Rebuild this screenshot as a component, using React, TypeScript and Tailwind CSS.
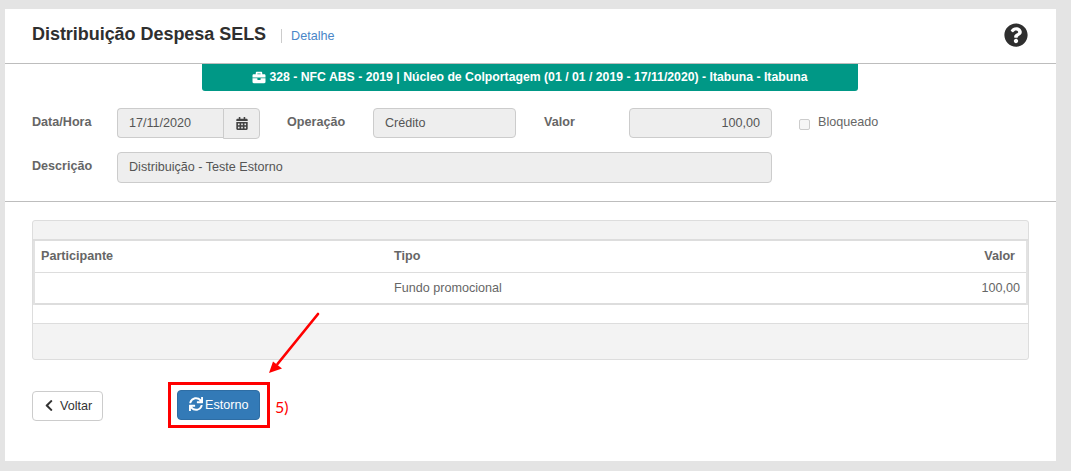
import { FaBriefcase, FaCalendarAlt, FaChevronLeft, FaQuestionCircle, FaSync } from 'react-icons/fa';

const label = 'text-[12.6px] font-bold text-[#666] leading-[16px]';
const field = 'h-[30px] bg-[#eee] border border-[#ccc] rounded-[4px] px-[11px] flex items-center text-[12.6px] text-[#555]';

export default function App() {
  return (
    <div className="h-[471px] w-[1071px] bg-[#e4e4e4] pt-[9px] pl-[5px] overflow-hidden font-['Liberation_Sans',Arial,sans-serif]">
      <div className="relative w-[1051px] h-[452px] bg-white">
        {/* Title */}
        <div className="h-[55px] border-b border-[#bdbdbd] pl-[27px] pr-[28px] flex items-center">
          <h1 className="text-[18px] leading-[24px] font-bold text-[#2f2f2f] -mt-[4px] tracking-[-0.04px]">Distribuição Despesa SELS</h1>
          <span className="ml-[15px] border-l border-[#ccc] pl-[9px] text-[12.6px] leading-[14px] text-[#4a86c8]">Detalhe</span>
          <FaQuestionCircle className="ml-auto w-[24px] h-[24px] text-[#2f2f2f] -mt-[3px]" />
        </div>

        {/* Project band */}
        <div className="ml-[197px] w-[656px] h-[27px] bg-[#009886] rounded-b-[3px] flex items-center justify-center gap-[3px] text-[12.25px] font-bold text-white">
          <FaBriefcase className="w-[14px] h-[13px]" />
          <span>328 - NFC ABS - 2019 | Núcleo de Colportagem (01 / 01 / 2019 - 17/11/2020) - Itabuna - Itabuna</span>
        </div>

        {/* Form */}
        <div className="pl-[27px] pt-[17px] h-[111px] border-b border-[#bdbdbd]">
          <div className="flex items-start">
            <span className={`${label} w-[85px] mt-[6px]`}>Data/Hora</span>
            <div className={`${field} w-[106px] rounded-r-none border-r-0`}>17/11/2020</div>
            <div className="w-[37px] h-[31px] bg-[#eee] border border-[#ccc] rounded-r-[4px] flex items-center justify-center text-[#444]">
              <FaCalendarAlt className="w-[12px] h-[13px]" />
            </div>
            <span className={`${label} w-[86px] ml-[27px] mt-[6px]`}>Operação</span>
            <div className={`${field} w-[143px]`}>Crédito</div>
            <span className={`${label} w-[85px] ml-[28px] mt-[6px]`}>Valor</span>
            <div className={`${field} w-[143px] justify-end`}>100,00</div>
            <div className="ml-[27px] mt-[11px] w-[11px] h-[11px] border border-[#ccc] rounded-[2px] bg-[#f6f6f6]" />
            <span className="ml-[8px] mt-[6px] text-[12.6px] leading-[16px] text-[#666]">Bloqueado</span>
          </div>
          <div className="flex items-start mt-[13px]">
            <span className={`${label} w-[85px] mt-[6px]`}>Descrição</span>
            <div className={`${field} w-[655px] h-[31px]`}>Distribuição - Teste Estorno</div>
          </div>
        </div>

        {/* Grid panel */}
        <div className="ml-[27px] mt-[18px] w-[997px] h-[140px] border border-[#ddd] rounded-[3px] bg-[#f3f3f3] overflow-hidden flex flex-col">
          <div className="h-[20px] shrink-0 border-b-2 border-[#ddd]" />
          <div className="bg-white border-x-2 border-[#e2e2e2] text-[12.6px] text-[#666]">
            <div className="h-[32px] border-b border-[#ddd] flex items-center font-bold">
              <span className="w-[359px] pl-[6px]">Participante</span>
              <span className="flex-1">Tipo</span>
              <span className="pr-[11px]">Valor</span>
            </div>
            <div className="h-[32px] border-b-2 border-[#ddd] flex items-center">
              <span className="w-[359px]" />
              <span className="flex-1">Fundo promocional</span>
              <span className="pr-[6px]">100,00</span>
            </div>
          </div>
          <div className="h-[19px] shrink-0 bg-white border-b border-[#ddd]" />
        </div>

        {/* Actions */}
        <div className="ml-[27px] mt-[22px] flex items-start">
          <button className="mt-[9px] w-[71px] h-[30px] bg-white border border-[#ccc] rounded-[4px] flex items-center pl-[11px] gap-[6px] text-[12.6px] text-[#333]">
            <FaChevronLeft className="w-[10px] h-[13px] -mt-[2px]" />
            Voltar
          </button>
          <div className="ml-[65px] w-[102px] h-[46px] border-[3px] border-[#ff0000] flex items-center pl-[6px]">
            <button className="w-[83px] h-[30px] bg-[#337ab7] border border-[#2e6da4] rounded-[4px] flex items-center pl-[11px] gap-[2px] text-[12.6px] text-white">
              <FaSync className="w-[14px] h-[14px] -mt-[2px]" />
              Estorno
            </button>
          </div>
          <span className="ml-[5px] mt-[16px] text-[16px] leading-[18px] text-[#ff0000] font-['Lato',sans-serif]">5)</span>
        </div>

        {/* Arrow annotation */}
        <svg className="absolute left-[260px] top-[300px] w-[60px] h-[70px]" viewBox="0 0 60 70">
          <path d="M53 5 L12.5 55" stroke="#ff0000" strokeWidth="2.7" fill="none" strokeLinecap="round" />
          <path d="M4 64 L8 52.5 L17 59.5 Z" fill="#ff0000" />
        </svg>
      </div>
    </div>
  );
}
